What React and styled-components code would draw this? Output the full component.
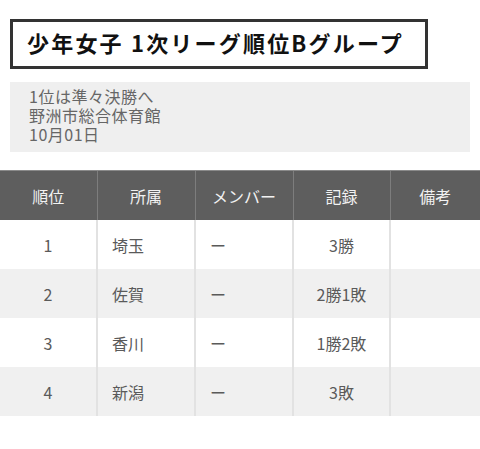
import React from 'react';
import styled, { createGlobalStyle } from 'styled-components';

const GlobalStyle = createGlobalStyle`
  body {
    margin: 0;
    background: #fff;
    font-family: "Noto Sans CJK JP", "Noto Sans", sans-serif;
  }
`

const Page = styled.main`
  display: flex;
  flex-direction: column;
  padding-top: 19px;
`

const Title = styled.h2`
  box-sizing: border-box;
  width: 418px;
  height: 50px;
  margin: 0 0 0 10px;
  padding: 0 0 4px 14px;
  border: 3px solid #333;
  display: flex;
  align-items: center;
  font-size: 22px;
  font-weight: 700;
  color: #111;
  letter-spacing: 2.2px;
`

const Info = styled.div`
  box-sizing: border-box;
  width: 460px;
  margin: 13px 0 0 10px;
  padding: 5px 19px 8px;
  background: #efefef;
  color: #666;
  font-size: 16px;
  line-height: 19px;
  letter-spacing: 0.5px;
`

const Table = styled.table`
  width: 480px;
  margin-top: 18px;
  border-collapse: collapse;
  table-layout: fixed;
  font-size: 16px;
`

const Head = styled.th`
  height: 49px;
  padding: 0;
  background: #5e5e5e;
  color: #f2f2f2;
  font-weight: 400;
  text-align: center;
  border-top: 1px solid #8a8a8a;
  border-left: 1px solid #7d7d7d;
  &:first-child { border-left: none; }
`

const Row = styled.tr`
  background: ${p => (p.$odd ? '#f0f0f0' : '#fff')};
`

const Cell = styled.td`
  height: 49px;
  padding: 0 0 0 ${p => (p.$align === 'left' ? '14px' : '0')};
  color: #5a5a5a;
  text-align: ${p => p.$align || 'center'};
  border-left: 2px solid #e2e2e2;
  &:first-child { border-left: none; }
`

const rows = [
  ['1', '埼玉', '3勝'],
  ['2', '佐賀', '2勝1敗'],
  ['3', '香川', '1勝2敗'],
  ['4', '新潟', '3敗'],
]

const App = () => {
  return (
    <Page>
      <GlobalStyle />
      <Title>少年女子 1次リーグ順位Bグループ</Title>
      <Info>
        1位は準々決勝へ<br />
        野洲市総合体育館<br />
        10月01日
      </Info>
      <Table>
        <colgroup>
          <col style={{ width: 97 }} />
          <col style={{ width: 98 }} />
          <col style={{ width: 98 }} />
          <col style={{ width: 97 }} />
          <col />
        </colgroup>
        <thead>
          <tr>
            <Head>順位</Head>
            <Head>所属</Head>
            <Head>メンバー</Head>
            <Head>記録</Head>
            <Head>備考</Head>
          </tr>
        </thead>
        <tbody>
          {rows.map((r, i) => (
            <Row key={i} $odd={i % 2 === 1}>
              <Cell>{r[0]}</Cell>
              <Cell $align="left">{r[1]}</Cell>
              <Cell $align="left">ー</Cell>
              <Cell>{r[2]}</Cell>
              <Cell></Cell>
            </Row>
          ))}
        </tbody>
      </Table>
    </Page>
  )
}

export default App
